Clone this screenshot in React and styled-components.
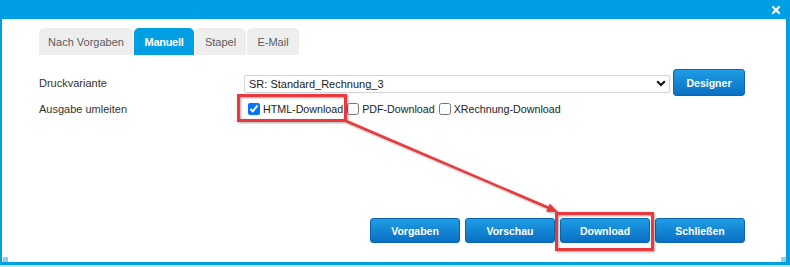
import React from 'react';
import styled, { createGlobalStyle } from 'styled-components';

const GlobalStyle = createGlobalStyle`
  html, body { margin: 0; padding: 0; background: #cddbe4; }
  body { font-family: "Liberation Sans", Arial, sans-serif; }
`;

const BLUE = '#009fe3';

const Page = styled.div`
  position: relative;
  width: 790px;
  height: 267px;
`;

const Dialog = styled.div`
  box-sizing: border-box;
  width: 790px;
  height: 265px;
  background: #fff;
  border-left: 2px solid ${BLUE};
  border-right: 4px solid ${BLUE};
  border-bottom: 3px solid ${BLUE};
  display: flex;
  flex-direction: column;
`;

const TitleBar = styled.div`
  height: 19px;
  background: ${BLUE};
  display: flex;
  align-items: center;
  justify-content: flex-end;
  padding-right: 6px;
`;

const Body = styled.div`
  flex: 1;
  display: flex;
  flex-direction: column;
  padding: 9px 41px 19px 37px;
`;

const TabList = styled.div`
  display: flex;
  gap: 1px;
`;

const Tab = styled.div`
  width: ${p => p.$w}px;
  height: 27px;
  display: flex;
  align-items: center;
  justify-content: center;
  border-radius: 5px 5px 0 0;
  background: ${p => (p.$active ? BLUE : '#eeeeee')};
  color: ${p => (p.$active ? '#fff' : '#5a5a5a')};
  font-size: 11px;
  font-weight: ${p => (p.$active ? 'bold' : 'normal')};
  letter-spacing: ${p => (p.$active ? '-0.3px' : '0')};
`;

const Form = styled.div`
  margin-top: 14px;
  display: flex;
  flex-direction: column;
  gap: 3px;
`;

const Row = styled.div`
  display: flex;
  align-items: center;
  height: ${p => p.$h}px;
`;

const Label = styled.div`
  width: 205px;
  font-size: 11px;
  color: #333;
`;

const SelectWrap = styled.div`
  flex: 1;
  position: relative;
  height: 18px;
  margin-right: 3px;
`;

const Select = styled.select`
  box-sizing: border-box;
  width: 100%;
  height: 18px;
  appearance: none;
  border: 1px solid #d4d4d4;
  border-radius: 2px;
  background: #fff;
  padding: 0 0 0 4px;
  font-family: "Liberation Sans", Arial, sans-serif;
  font-size: 11px;
  color: #222;
  outline: none;
`;

const Chevron = styled.svg`
  position: absolute;
  right: 4px;
  top: 6px;
  pointer-events: none;
`;

const Button = styled.button`
  box-sizing: border-box;
  width: ${p => p.$w}px;
  height: ${p => p.$h || 25}px;
  border: 1px solid #0b66b3;
  border-radius: 3px;
  background: linear-gradient(#1f9de5, #0a6fc3);
  color: #fff;
  font-family: "Liberation Sans", Arial, sans-serif;
  font-size: 10.5px;
  font-weight: bold;
  padding: 0;
  cursor: pointer;
`;

const Options = styled.div`
  display: flex;
  align-items: center;
  font-size: 10.7px;
  color: #222;

  input { width: 12px; height: 12px; margin: 3px 3px 3px 4px; }
`;

const Footer = styled.div`
  margin-top: auto;
  display: flex;
  justify-content: flex-end;
  gap: 5px;
`;

const Annotations = styled.svg`
  position: absolute;
  left: 0;
  top: 0;
  pointer-events: none;
  filter: drop-shadow(1px 1px 1.2px rgba(0, 0, 0, 0.35));
`;

const Grip = styled.div`
  position: absolute;
  top: 257px;
  left: ${p => p.$x}px;
  width: 5px;
  height: 5px;
  background: #8dd0f2;
`;

export default function App() {
  return (
    <>
      <GlobalStyle />
      <Page>
        <Dialog>
          <TitleBar>
            <svg width="8" height="8" viewBox="0 0 8 8">
              <path d="M1 1L7 7M7 1L1 7" stroke="#fff" strokeWidth="2.2" strokeLinecap="square" />
            </svg>
          </TitleBar>
          <Body>
            <TabList>
              <Tab $w={94}>Nach Vorgaben</Tab>
              <Tab $w={60} $active>Manuell</Tab>
              <Tab $w={51}>Stapel</Tab>
              <Tab $w={52}>E-Mail</Tab>
            </TabList>
            <Form>
              <Row $h={27}>
                <Label>Druckvariante</Label>
                <SelectWrap>
                  <Select defaultValue="sr3">
                    <option value="sr3">SR: Standard_Rechnung_3</option>
                  </Select>
                  <Chevron width="10" height="7" viewBox="0 0 10 7">
                    <path d="M1.2 1.2L5 5L8.8 1.2" fill="none" stroke="#111" strokeWidth="2" />
                  </Chevron>
                </SelectWrap>
                <Button $w={72} $h={27}>Designer</Button>
              </Row>
              <Row $h={20}>
                <Label>Ausgabe umleiten</Label>
                <Options>
                  <input type="checkbox" defaultChecked id="html" /><label htmlFor="html">HTML-Download</label>
                  <input type="checkbox" id="pdf" /><label htmlFor="pdf">PDF-Download</label>
                  <input type="checkbox" id="xr" /><label htmlFor="xr">XRechnung-Download</label>
                </Options>
              </Row>
            </Form>
            <Footer>
              <Button $w={90}>Vorgaben</Button>
              <Button $w={90}>Vorschau</Button>
              <Button $w={90}>Download</Button>
              <Button $w={90}>Schließen</Button>
            </Footer>
          </Body>
        </Dialog>
        <Grip $x={3} />
        <Grip $x={781} />
        <Annotations width="790" height="267" viewBox="0 0 790 267">
          <rect x="238.5" y="95.5" width="107" height="25" fill="none" stroke="#e9393f" strokeWidth="3" />
          <rect x="556.5" y="213.5" width="96" height="36" fill="none" stroke="#e9393f" strokeWidth="3" />
          <line x1="346" y1="121" x2="549" y2="208" stroke="#e9393f" strokeWidth="2.5" />
          <polygon points="558,212 546.1,211.8 549.7,203.5" fill="#e9393f" />
        </Annotations>
      </Page>
    </>
  );
}
